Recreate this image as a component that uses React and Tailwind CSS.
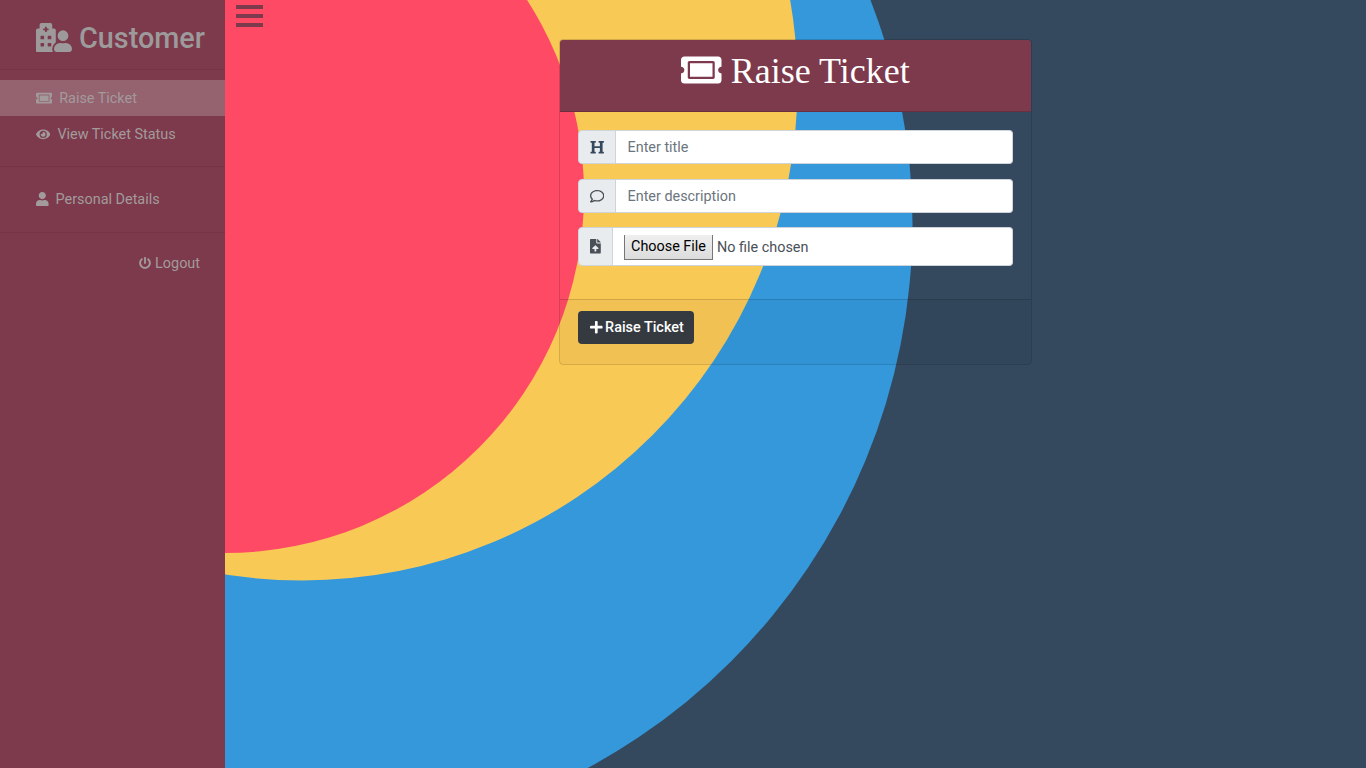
import React from 'react';
import {
  FaHospitalUser,
  FaTicketAlt,
  FaEye,
  FaUser,
  FaPowerOff,
  FaHeading,
  FaRegComment,
  FaFileUpload,
  FaPlus,
} from 'react-icons/fa';

const Backdrop = () => (
  <svg className="absolute inset-0 w-full h-full" viewBox="0 0 1366 768">
    <circle cx="294.5" cy="224" r="618" fill="#3498db" />
    <circle cx="302" cy="85" r="495.5" fill="#f9c956" />
    <circle cx="225" cy="194" r="359" fill="#ff4a65" />
  </svg>
);

const NavLink = ({ icon: Icon, label, active, iconClass }) => (
  <a
    className={`flex items-center h-9 pl-9 text-[14.4px] text-[#a39a9c] ${active ? 'bg-[#956270]' : ''}`}
  >
    <Icon className={`shrink-0 mr-[7px] ${iconClass}`} />
    <span className="pt-[2px]">{label}</span>
  </a>
);

const Sidebar = () => (
  <aside className="w-[225px] h-full shrink-0 bg-[#7c3a4c] text-[#9d9a9b]">
    <div className="h-[70px] pl-9 pt-[22px] border-b border-[#743446] flex items-start">
      <FaHospitalUser className="w-[36px] h-[29px] mr-[7px] mt-px" />
      <h3 className="text-[28.8px] leading-[32px] font-medium">Customer</h3>
    </div>
    <div className="pt-2.5 pb-3.5 border-b border-[#743446]">
      <NavLink icon={FaTicketAlt} label="Raise Ticket" active iconClass="w-[16.2px] h-[14.4px]" />
      <NavLink icon={FaEye} label="View Ticket Status" iconClass="w-[14.4px] h-[12.8px]" />
    </div>
    <div className="pt-3.5 pb-[15px] border-b border-[#743446]">
      <NavLink icon={FaUser} label="Personal Details" iconClass="w-[12.6px] h-[14.4px]" />
    </div>
    <div className="flex justify-end items-center pr-[25px] pt-[20px] text-[14.4px] text-[#a39a9c]">
      <FaPowerOff className="w-[12px] h-[12px] mr-1 -mt-[2px]" />
      Logout
    </div>
  </aside>
);

const InputIcon = ({ children, className }) => (
  <span
    className={`flex items-center justify-center shrink-0 bg-[#e9ecef] border border-[#ced4da] rounded-l text-[#495057] ${className}`}
  >
    {children}
  </span>
);

const TicketCard = () => (
  <div className="w-[473px] mx-auto mt-[39px] border border-black/15 rounded">
    <div className="h-[72px] pb-[9px] bg-[#7c3a4c] rounded-t-[3px] border-b border-black/15 flex items-center justify-center text-white font-['Liberation_Serif',serif] text-[36px]">
      <FaTicketAlt className="w-[40.5px] h-[36px] mr-[9px] -mt-[3px]" />
      <span>Raise Ticket</span>
    </div>
    <div className="px-[18px] pt-[18px] pb-[33px] flex flex-col">
      <div className="flex h-[34px]">
        <InputIcon className="w-[38px]">
          <FaHeading className="w-[14.4px] h-[14.4px] text-[#34495e]" />
        </InputIcon>
        <input
          placeholder="Enter title"
          className="flex-1 min-w-0 bg-white border border-l-0 border-[#ced4da] rounded-r pl-[11.5px] pr-3 pt-[2px] text-[14.4px] text-[#495057] placeholder:text-[#6c757d] outline-none"
        />
      </div>
      <div className="flex h-[34px] mt-[15px]">
        <InputIcon className="w-[38px]">
          <FaRegComment className="w-[14.4px] h-[14.4px]" />
        </InputIcon>
        <input
          placeholder="Enter description"
          className="flex-1 min-w-0 bg-white border border-l-0 border-[#ced4da] rounded-r pl-[11.5px] pr-3 pt-[2px] text-[14.4px] text-[#495057] placeholder:text-[#6c757d] outline-none"
        />
      </div>
      <div className="flex h-[39px] mt-[14px]">
        <InputIcon className="w-[35px]">
          <FaFileUpload className="w-[10.8px] h-[14.4px]" />
        </InputIcon>
        <div className="flex-1 min-w-0 flex items-center bg-white border border-l-0 border-[#ced4da] rounded-r pl-[11px] pt-[2px]">
          <input
            type="file"
            className="w-full text-[14.4px] text-[#495057] file:relative file:top-[-1px] file:h-[26px] file:w-[89px] file:mr-1 file:border file:border-[#767676] file:bg-[linear-gradient(#efefef,#dcdcdc)] file:text-black file:rounded-none"
          />
        </div>
      </div>
    </div>
    <div className="h-[65px] border-t border-black/15 bg-black/[0.03] rounded-b-[3px] px-[18px] pt-[11px]">
      <button className="h-[33px] w-[116px] pl-3 flex items-center bg-[#343a40] text-white rounded text-[14.4px] font-medium">
        <FaPlus className="w-[12.6px] h-[14.4px] mr-[2.5px]" />
        Raise Ticket
      </button>
    </div>
  </div>
);

const App = () => (
  <div className="relative h-screen overflow-hidden bg-[#34495e] font-['Roboto',sans-serif]">
    <Backdrop />
    <div className="relative flex h-full">
      <Sidebar />
      <main className="flex-1 min-w-0">
        <div className="absolute left-[236px] top-[5px] w-[27px] flex flex-col gap-[5px]">
          <span className="h-1 bg-[#7c3a4c]" />
          <span className="h-1 bg-[#7c3a4c]" />
          <span className="h-1 bg-[#7c3a4c]" />
        </div>
        <TicketCard />
      </main>
    </div>
  </div>
);

export default App;
